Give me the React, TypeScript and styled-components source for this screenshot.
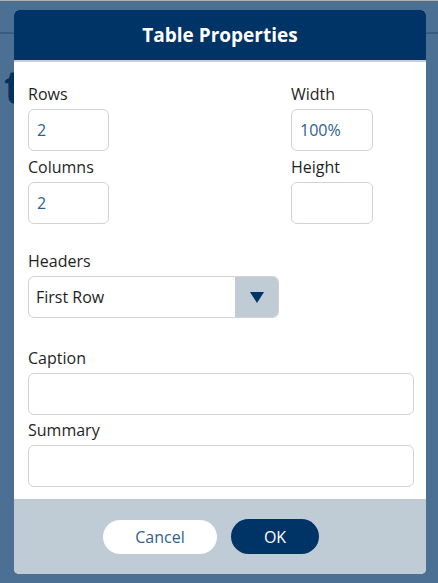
import styled, { createGlobalStyle } from "styled-components"

const Global = createGlobalStyle`
  html, body {
    margin: 0;
    padding: 0;
  }
  body {
    font-family: "Open Sans", "Noto Sans", sans-serif;
    background: #ffffff;
  }
  * { box-sizing: border-box; }
`

const Page = styled.div`
  position: relative;
  height: 583px;
  overflow: hidden;
  background: #ffffff;
  border-top: 1px solid #b0b0b0;
`

const TopBar = styled.div`
  height: 33px;
  border-bottom: 2px solid #c0c0c0;
`

const PageTitle = styled.h1`
  margin: 29px 0 0 4px;
  font-size: 46px;
  font-weight: 700;
  line-height: 1;
  color: #0b2e52;
`

const Backdrop = styled.div`
  position: absolute;
  inset: 0;
  background: rgba(0, 51, 102, 0.7);
`

const Dialog = styled.div`
  position: absolute;
  left: 14px;
  top: 9px;
  width: 412px;
  border-radius: 5px;
  overflow: hidden;
  background: #ffffff;
  display: flex;
  flex-direction: column;
`

const Header = styled.div`
  height: 52px;
  background: #003366;
  border-bottom: 2px solid #c3cfda;
  display: flex;
  align-items: center;
  justify-content: center;
  color: #ffffff;
  font-size: 19px;
  font-weight: 700;
`

const Body = styled.div`
  padding: 21px 12px 12px 14px;
  display: flex;
  flex-direction: column;
`

const TopGrid = styled.div`
  display: flex;
  justify-content: space-between;
  padding-right: 41px;
`

const Column = styled.div`
  display: flex;
  flex-direction: column;
`

const Field = styled.div<{ $gap?: number }>`
  display: flex;
  flex-direction: column;
  margin-top: ${(p) => p.$gap ?? 0}px;
`

const Label = styled.label`
  font-size: 16px;
  line-height: 22px;
  color: #1f1f1f;
  margin-bottom: 4px;
`

const TextInput = styled.input<{ $w?: number }>`
  width: ${(p) => (p.$w ? `${p.$w}px` : "100%")};
  height: 42px;
  border: 1.5px solid #d2d2d2;
  border-radius: 6px;
  padding: 0 8px;
  font-family: inherit;
  font-size: 16px;
  color: #2f5f8f;
  background: #ffffff;
  outline: none;
`

const Select = styled.div`
  width: 251px;
  height: 42px;
  border: 1.5px solid #d2d2d2;
  border-radius: 6px;
  display: flex;
  align-items: stretch;
  overflow: hidden;
`

const SelectValue = styled.div`
  flex: 1;
  display: flex;
  align-items: center;
  padding-left: 7px;
  font-size: 16px;
  color: #1e1e1e;
`

const SelectArrow = styled.div`
  width: 43px;
  background: #bfccd6;
  display: flex;
  align-items: center;
  justify-content: center;
`

const Footer = styled.div`
  height: 75px;
  background: #bfcbd5;
  display: flex;
  align-items: center;
  justify-content: center;
  gap: 14px;
  padding-right: 18px;
`

const Button = styled.button<{ $primary?: boolean }>`
  height: ${(p) => (p.$primary ? 35 : 34)}px;
  width: ${(p) => (p.$primary ? 88 : 114)}px;
  border: none;
  border-radius: 18px;
  font-family: inherit;
  font-size: 16px;
  background: ${(p) => (p.$primary ? "#003366" : "#ffffff")};
  color: ${(p) => (p.$primary ? "#ffffff" : "#2f5f8f")};
  cursor: pointer;
`

const App = () => {
  return (
    <>
      <Global />
      <Page>
        <TopBar />
        <PageTitle>t</PageTitle>
        <Backdrop />
        <Dialog>
          <Header>Table Properties</Header>
          <Body>
            <TopGrid>
              <Column>
                <Field>
                  <Label>Rows</Label>
                  <TextInput $w={81} defaultValue="2" />
                </Field>
                <Field $gap={5}>
                  <Label>Columns</Label>
                  <TextInput $w={81} defaultValue="2" />
                </Field>
              </Column>
              <Column>
                <Field>
                  <Label>Width</Label>
                  <TextInput $w={82} defaultValue="100%" />
                </Field>
                <Field $gap={5}>
                  <Label>Height</Label>
                  <TextInput $w={82} defaultValue="" />
                </Field>
              </Column>
            </TopGrid>
            <Field $gap={26}>
              <Label>Headers</Label>
              <Select>
                <SelectValue>First Row</SelectValue>
                <SelectArrow>
                  <svg width="14" height="11" viewBox="0 0 14 11">
                    <path d="M0 0 H14 L7 11 Z" fill="#003366" />
                  </svg>
                </SelectArrow>
              </Select>
            </Field>
            <Field $gap={29}>
              <Label>Caption</Label>
              <TextInput defaultValue="" />
            </Field>
            <Field $gap={4}>
              <Label>Summary</Label>
              <TextInput defaultValue="" />
            </Field>
          </Body>
          <Footer>
            <Button>Cancel</Button>
            <Button $primary>OK</Button>
          </Footer>
        </Dialog>
      </Page>
    </>
  )
}

export default App
